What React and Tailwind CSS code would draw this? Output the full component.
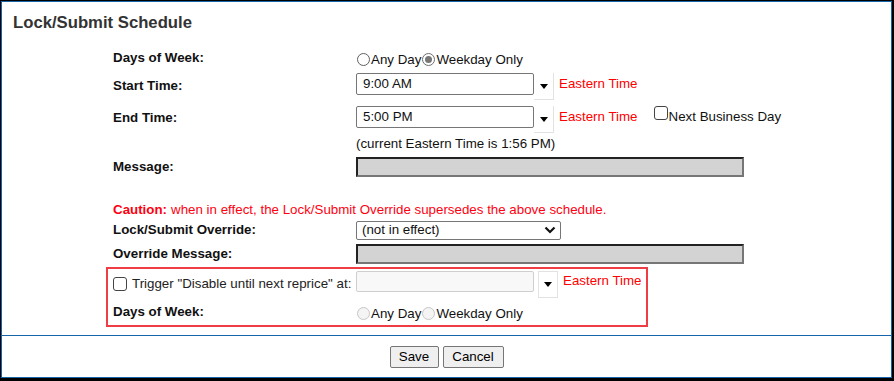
import React from 'react';

const Radio = ({ checked, disabled }) => (
  <span
    className={
      disabled
        ? 'inline-flex items-center justify-center w-[13px] h-[13px] rounded-full border border-[#c6c6c6] bg-[#f4f4f4] mx-[1px]'
        : checked
        ? 'inline-flex items-center justify-center w-[13px] h-[13px] rounded-full border border-[#6d6d6d] bg-white mx-[1px]'
        : 'inline-flex items-center justify-center w-[13px] h-[13px] rounded-full border border-[#5f5f5f] bg-white mx-[1px]'
    }
  >
    {checked && <span className="w-[7px] h-[7px] rounded-full bg-[#777]" />}
  </span>
);

const Checkbox = () => (
  <span className="inline-block w-[14px] h-[14px] rounded-[3px] border border-[#444] bg-white" />
);

const DropButton = ({ className }) => (
  <div className={`w-[20px] h-[27px] bg-white border-r border-b border-[#e2e2e2] flex items-center justify-center ${className || ''}`}>
    <span className="w-0 h-0 border-l-[4px] border-r-[4px] border-t-[5px] border-l-transparent border-r-transparent border-t-black" />
  </div>
);

const Row = ({ label, h, children, bold = true }) => (
  <div className={`flex items-center ${h}`}>
    <div className={`w-[243px] shrink-0 ${bold ? 'font-bold' : ''}`}>{label}</div>
    {children}
  </div>
);

const GrayInput = () => (
  <div className="w-[388px] h-[20px] bg-[#d3d3d3] border-2 border-t-[#222] border-l-[#222] border-b-[#767676] border-r-[#767676]" />
);

export default function App() {
  return (
    <div className="w-[894px] h-[381px] bg-white border-t border-l border-r-2 border-b-[3px] border-black font-['Liberation_Sans',Arial,sans-serif] text-[13.33px] text-[#111]">
      <div className="h-full border border-[#1565a8] flex flex-col">
        <div className="h-[45px] pl-[11px] pt-[11px] text-[16.7px] leading-[19px] font-bold text-[#333]">
          Lock/Submit Schedule
        </div>

        <div className="pl-[111px]">
          <Row label="Days of Week:" h="h-[22px]">
            <div className="flex items-center leading-[16px] pt-[3px]">
              <Radio />
              <span>Any Day</span>
              <Radio checked />
              <span>Weekday Only</span>
            </div>
          </Row>

          <Row label="Start Time:" h="h-[33px]">
            <div className="flex items-start pt-[4px] self-start">
              <div className="w-[178px] h-[22px] border border-[#767676] rounded-[2px] bg-white pl-[6px] leading-[20px]">9:00 AM</div>
              <DropButton />
              <span className="ml-[5px] leading-[22px] text-[#f00]">Eastern Time</span>
            </div>
          </Row>

          <Row label="End Time:" h="h-[31px]">
            <div className="flex items-start pt-[4px] self-start">
              <div className="w-[178px] h-[22px] border border-[#767676] rounded-[2px] bg-white pl-[6px] leading-[20px]">5:00 PM</div>
              <DropButton />
              <span className="ml-[5px] leading-[22px] text-[#f00]">Eastern Time</span>
              <span className="ml-[16px] flex items-start">
                <Checkbox />
                <span className="ml-[1px] leading-[22px]">Next Business Day</span>
              </span>
            </div>
          </Row>

          <Row label="" h="h-[22px]">
            <span>(current Eastern Time is 1:56 PM)</span>
          </Row>

          <Row label="Message:" h="h-[24px]">
            <GrayInput />
          </Row>

          <div className="mt-[22px] h-[18px] flex items-center text-[#f01]">
            <span className="font-bold">Caution:</span>
            <span className="ml-[4px]">when in effect, the Lock/Submit Override supersedes the above schedule.</span>
          </div>

          <Row label="Lock/Submit Override:" h="h-[22px]">
            <div className="w-[205px] h-[19px] border border-[#767676] rounded-[2px] bg-white flex items-center justify-between pl-[5px] pr-[4px]">
              <span>(not in effect)</span>
              <svg width="12" height="8" viewBox="0 0 12 8">
                <path d="M1.5 1.5 L6 6 L10.5 1.5" fill="none" stroke="#111" strokeWidth="2.2" />
              </svg>
            </div>
          </Row>

          <Row label="Override Message:" h="h-[25px]">
            <GrayInput />
          </Row>
        </div>

        <div className="ml-[104px] mt-[1px] w-[542px] h-[60px] border-2 border-[#ee3d45] pl-[5px]">
          <div className="flex h-[30px]">
            <div className="w-[243px] shrink-0 flex items-center">
              <Checkbox />
              <span className="ml-[5px] text-[#222]">Trigger "Disable until next reprice" at:</span>
            </div>
            <div className="flex items-start pt-[2px]">
              <div className="w-[178px] h-[21px] border border-[#cfcfcf] rounded-[2px] bg-[#f8f8f8]" />
              <DropButton className="ml-[4px] border-l border-t" />
              <span className="ml-[5px] leading-[20px] text-[#f00]">Eastern Time</span>
            </div>
          </div>
          <Row label="Days of Week:" h="h-[26px]">
            <div className="flex items-center leading-[16px] pt-[3px]">
              <Radio disabled />
              <span>Any Day</span>
              <Radio disabled />
              <span>Weekday Only</span>
            </div>
          </Row>
        </div>

        <div className="mt-[8px] border-t border-[#1565a8] pt-[10px] flex justify-center gap-[4px]">
          <button className="w-[49px] h-[22px] bg-[#efefef] border border-[#767676] rounded-[2px] text-[13.33px] text-black">Save</button>
          <button className="w-[61px] h-[22px] bg-[#efefef] border border-[#767676] rounded-[2px] text-[13.33px] text-black">Cancel</button>
        </div>
      </div>
    </div>
  );
}
